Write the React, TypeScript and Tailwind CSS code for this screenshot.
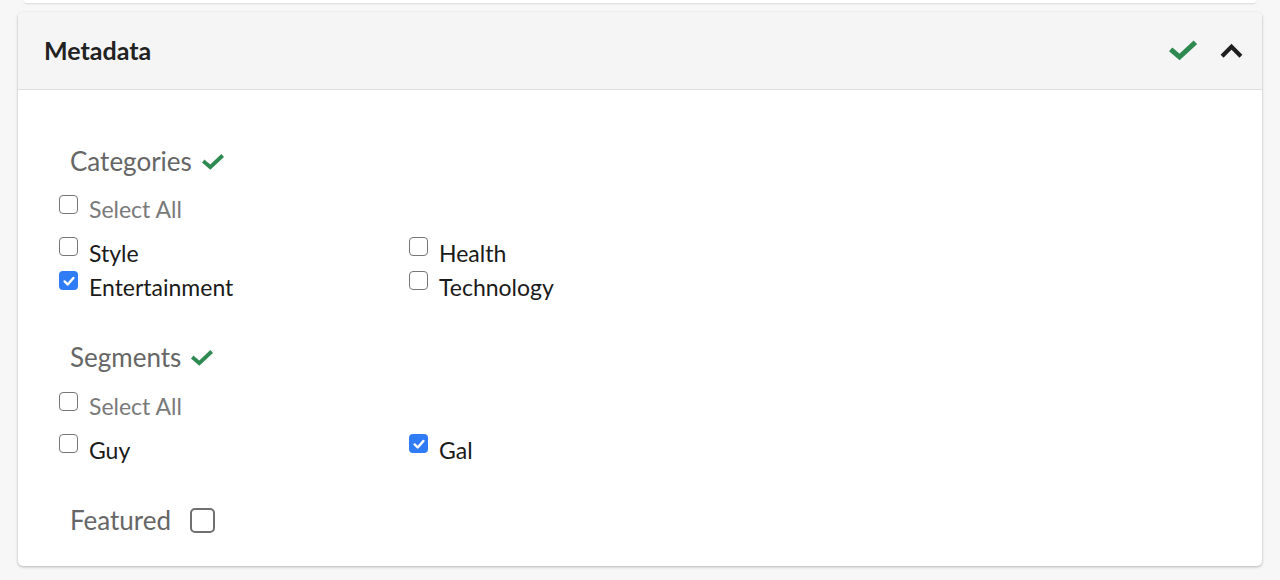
import React from 'react';

function Tick({ className }: { className?: string }) {
  return (
    <svg viewBox="0 0 28 20" className={className} fill="none">
      <path d="M3.5 10.5 L10.5 16.5 L24.5 3.5" stroke="currentColor" strokeWidth="5" strokeLinecap="square" strokeLinejoin="miter" />
    </svg>
  );
}

function Box({ checked = false, big = false }: { checked?: boolean; big?: boolean }) {
  if (checked) {
    return (
      <span className="flex h-[19px] w-[19px] shrink-0 items-center justify-center rounded-[4px] bg-[#2f7cf6]">
        <svg viewBox="0 0 16 16" className="h-[14px] w-[14px]" fill="none">
          <path d="M3 8.5 L6.5 12 L13 4.5" stroke="white" strokeWidth="2.8" strokeLinecap="round" strokeLinejoin="round" />
        </svg>
      </span>
    );
  }
  return (
    <span
      className={
        big
          ? 'block h-[25px] w-[25px] shrink-0 rounded-[5px] border-2 border-[#707070] bg-white'
          : 'block h-[19px] w-[19px] shrink-0 rounded-[4px] border-[1.5px] border-[#767676] bg-white'
      }
    />
  );
}

function Option({ label, checked = false }: { label: string; checked?: boolean }) {
  return (
    <div className="flex h-[34px] w-[350px] items-start">
      <span className="mt-[1px]">
        <Box checked={checked} />
      </span>
      <span className="ml-[11px] text-[23px] leading-[34px] text-[#1a1a1a]">{label}</span>
    </div>
  );
}

function SelectAll() {
  return (
    <div className="flex h-[28px] items-start">
      <Box />
      <span className="ml-[11px] text-[23px] leading-[28px] text-[#7a7a7a]">Select All</span>
    </div>
  );
}

function GroupLabel({ text }: { text: string }) {
  return (
    <div className="flex h-[32px] items-center pl-[11px]">
      <span className="text-[26px] leading-[32px] text-[#666]">{text}</span>
      <Tick className="ml-[10px] mt-[2px] h-[16px] w-[22px] text-[#2f8a52]" />
    </div>
  );
}

export default function App() {
  return (
    <div className="min-h-[580px] bg-[#f7f7f7] px-[18px] font-['Lato',sans-serif]">
      {/* previous card edge */}
      <div className="mx-[6px] h-[3px] rounded-b-[4px] bg-white shadow-[0_1px_2px_rgba(0,0,0,0.12)]" />

      <div className="mt-[9px] overflow-hidden rounded-[5px] bg-white shadow-[0_1px_3px_rgba(0,0,0,0.28)]">
        <div className="flex h-[78px] items-center justify-between border-b border-[#dedede] bg-[#f5f5f5] pl-[26px] pr-[19px]">
          <h2 className="text-[25px] font-bold text-[#222]">Metadata</h2>
          <div className="flex items-center gap-[23px]">
            <Tick className="h-[21px] w-[28px] text-[#2f8a52]" />
            <svg viewBox="0 0 24 16" className="h-[15px] w-[23px] text-[#1f1f1f]" fill="none">
              <path d="M3.5 12.5 L12 4 L20.5 12.5" stroke="currentColor" strokeWidth="4.4" strokeLinecap="square" strokeLinejoin="miter" />
            </svg>
          </div>
        </div>

        <div className="pb-[30px] pl-[41px] pt-[55px]">
          <GroupLabel text="Categories" />
          <div className="mt-[18px]">
            <SelectAll />
          </div>
          <div className="mt-[13px] grid w-[700px] grid-cols-2">
            <Option label="Style" />
            <Option label="Health" />
            <Option label="Entertainment" checked />
            <Option label="Technology" />
          </div>

          <div className="mt-[37px]">
            <GroupLabel text="Segments" />
          </div>
          <div className="mt-[19px]">
            <SelectAll />
          </div>
          <div className="mt-[13px] grid w-[700px] grid-cols-2">
            <Option label="Guy" />
            <Option label="Gal" checked />
          </div>

          <div className="mt-[37px] flex h-[32px] items-center pl-[11px]">
            <span className="text-[26px] leading-[32px] text-[#666]">Featured</span>
            <span className="ml-[19px]">
              <Box big />
            </span>
          </div>
        </div>
      </div>
    </div>
  );
}
